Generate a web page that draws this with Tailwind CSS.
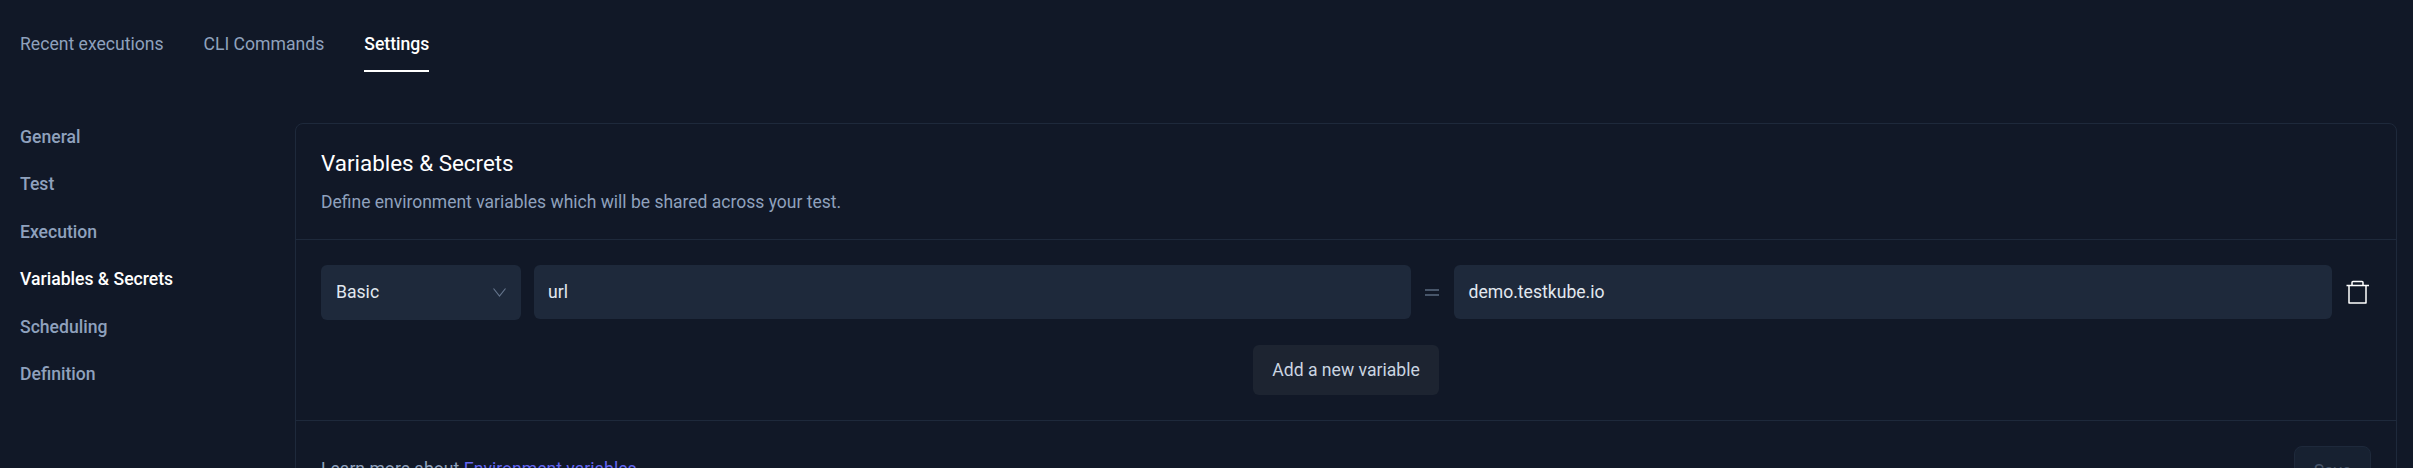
<!DOCTYPE html>
<html lang="en">
<head>
  <meta charset="UTF-8">
  <meta name="viewport" content="width=device-width, initial-scale=1.0">
  <title>Settings - Variables & Secrets</title>
  <script src="https://cdn.jsdelivr.net/npm/@tailwindcss/browser@4"></script>
</head>
<body class="h-[468px] overflow-hidden bg-[#111827] font-['Roboto',sans-serif] text-[17.6px]">
  <!-- tabs -->
  <nav class="flex gap-10 px-5 pt-8 h-[123px] items-start leading-6">
    <a class="h-10 text-[#8fa1bd]">Recent executions</a>
    <a class="h-10 text-[#8fa1bd]">CLI Commands</a>
    <a class="h-10 font-medium text-white border-b-2 border-white">Settings</a>
  </nav>

  <div class="flex pl-5 pr-4">
    <!-- side menu -->
    <aside class="w-[275px] shrink-0 flex flex-col gap-[23.4px] pt-0.5 leading-6 font-medium text-[#8fa1bd]">
      <a>General</a>
      <a>Test</a>
      <a>Execution</a>
      <a class="text-white">Variables &amp; Secrets</a>
      <a>Scheduling</a>
      <a>Definition</a>
    </aside>

    <!-- card -->
    <section class="flex-1 border border-[#1e293b] rounded-lg">
      <div class="px-[25px] pt-6 pb-[25px] border-b border-[#1e293b]">
        <h2 class="text-[22.4px] leading-[30px] text-white">Variables &amp; Secrets</h2>
        <p class="mt-3 text-[17.5px] leading-6 text-[#8fa1bd]">Define environment variables which will be shared across your test.</p>
      </div>

      <div class="px-[25px] pt-[25px] pb-[25px] border-b border-[#1e293b]">
        <div class="flex items-start">
          <div class="w-[200px] h-[55px] shrink-0 flex items-center justify-between pl-[15px] pr-[15px] rounded-md bg-[#1e293b] text-[#e2e8f0]">
            <span>Basic</span>
            <svg class="w-[13px] h-[9px] text-[#64748b]" viewBox="0 0 13 9" fill="none" stroke="currentColor" stroke-width="1.2"><path d="M.5 .5l6 7.500 6-7.500"/></svg>
          </div>
          <div class="ml-[13px] flex-1 h-[54px] flex items-center px-[14px] rounded-md bg-[#1e293b] text-[#e2e8f0]">url</div>
          <div class="w-[43px] shrink-0 h-[54px] flex items-center justify-center">
            <div class="w-[14px] h-[7px] border-y-2 border-[#475569]"></div>
          </div>
          <div class="flex-1 h-[54px] flex items-center px-[15px] rounded-md bg-[#1e293b] text-[#e2e8f0]">demo.testkube.io</div>
          <div class="w-[39px] shrink-0 h-[54px] flex items-center justify-end pr-px">
            <svg class="w-6 h-6 text-white" viewBox="0 0 24 24" fill="none" stroke="currentColor" stroke-width="1.5" stroke-linejoin="round"><path d="M.5 5.500h22.500M3 5.500v17.500h17V5.500M6 5.500V2.500q0-1 1-1h9q1 0 1 1v3"/></svg>
          </div>
        </div>
        <div class="flex justify-center mt-[25px]">
          <button class="h-[50px] w-[186px] rounded-md bg-[#1d2431] text-[#cbd5e1]">Add a new variable</button>
        </div>
      </div>

      <div class="flex items-start justify-between px-[25px] pt-[25px]">
        <p class="mt-[11px] leading-6 text-[#8fa1bd]">Learn more about <a class="text-[#6366f1]">Environment variables</a></p>
        <button class="h-[50px] w-[77px] rounded-lg border border-[#1e293b] bg-[#172131] text-[#475569]">Save</button>
      </div>
    </section>
  </div>
</body>
</html>
